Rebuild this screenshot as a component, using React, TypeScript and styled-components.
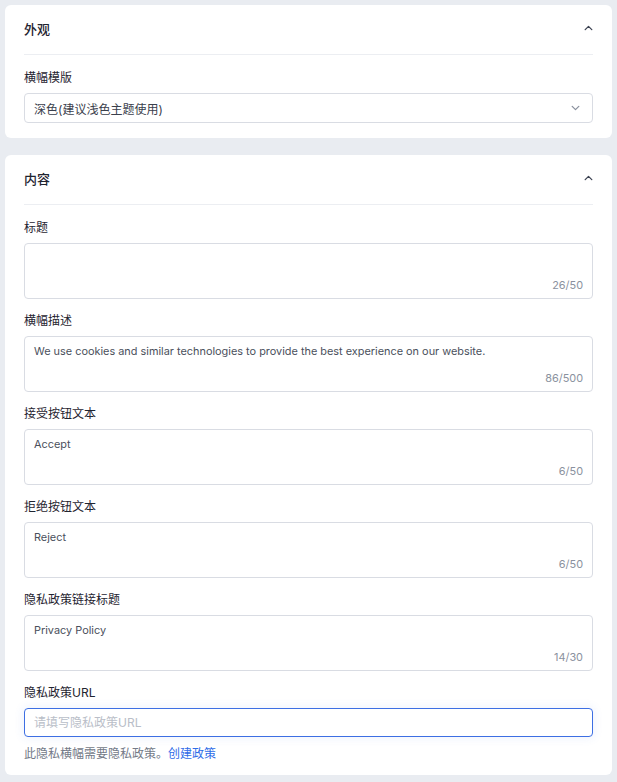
import React from "react";
import styled, { createGlobalStyle } from "styled-components";

const Global = createGlobalStyle`
  html, body { margin: 0; padding: 0; background: #e9ecf1; }
  body { font-family: Inter, "Noto Sans CJK SC", sans-serif; -webkit-font-smoothing: antialiased; }
  * { box-sizing: border-box; }
`;

const Page = styled.div`
  display: flex;
  flex-direction: column;
  gap: 17px;
  padding: 5px 5px 8px 5px;
`;

const Card = styled.section<{ $pb: number }>`
  background: #ffffff;
  border-radius: 6px;
  padding: 0 19px ${(p) => p.$pb}px 19px;
`;

const Header = styled.div`
  height: 50px;
  display: flex;
  align-items: center;
  justify-content: space-between;
  border-bottom: 1px solid #eceef2;
  padding-bottom: 3px;
`;

const Title = styled.h2`
  margin: 0;
  font-size: 13px;
  font-weight: 500;
  color: #1f2430;
`;

const Body = styled.div`
  padding-top: 13px;
  display: flex;
  flex-direction: column;
  gap: 12px;
`;

const Field = styled.div`
  display: flex;
  flex-direction: column;
  gap: 5px;
`;

const Label = styled.label`
  font-size: 12px;
  line-height: 20px;
  font-weight: 400;
  color: #1f2430;
`;

const SelectBox = styled.div`
  height: 30px;
  border: 1px solid #d9dce3;
  border-radius: 4px;
  display: flex;
  align-items: center;
  justify-content: space-between;
  padding: 0 12px 0 9px;
  font-size: 12px;
  color: #3a404c;
`;

const AreaWrap = styled.div`
  position: relative;
  height: 56px;
`;

const Area = styled.textarea`
  width: 100%;
  height: 100%;
  resize: none;
  border: 1px solid #d9dce3;
  border-radius: 4px;
  padding: 6px 9px;
  font-family: Inter, "Noto Sans CJK SC", sans-serif;
  font-size: 10.9px;
  line-height: 16px;
  color: #4a505c;
  outline: none;
  display: block;
`;

const Counter = styled.span`
  position: absolute;
  right: 10px;
  bottom: 6px;
  font-size: 10.9px;
  line-height: 16px;
  color: #8a919e;
`;

const UrlInput = styled.input`
  height: 29px;
  width: 100%;
  border: 1px solid #3d6fe3;
  border-radius: 4px;
  padding: 0 9px;
  font-family: Inter, "Noto Sans CJK SC", sans-serif;
  font-size: 12px;
  color: #3a404c;
  outline: none;
  box-shadow: 0 0 8px 2px rgba(61, 111, 227, 0.08);
  &::placeholder { color: #b9bec8; }
`;

const Help = styled.p`
  margin: 3px 0 0 0;
  font-size: 12px;
  line-height: 18px;
  color: #737a87;
`;

const Link = styled.a`
  color: #2f6ce8;
  text-decoration: none;
`;

const Chevron = ({ dir, color }: { dir: "up" | "down"; color: string }) => (
  <svg width="9" height="6" viewBox="0 0 9 6" fill="none">
    <path
      d={dir === "up" ? "M1.2 4.6 L4.5 1.4 L7.8 4.6" : "M1.2 1.4 L4.5 4.6 L7.8 1.4"}
      stroke={color}
      strokeWidth="1.3"
      strokeLinecap="round"
      strokeLinejoin="round"
    />
  </svg>
);

const fields = [
  { label: "标题", value: "", count: "26/50" },
  {
    label: "横幅描述",
    value: "We use cookies and similar technologies to provide the best experience on our website.",
    count: "86/500",
  },
  { label: "接受按钮文本", value: "Accept", count: "6/50" },
  { label: "拒绝按钮文本", value: "Reject", count: "6/50" },
  { label: "隐私政策链接标题", value: "Privacy Policy", count: "14/30" },
];

export default function App() {
  return (
    <>
      <Global />
      <Page>
        <Card $pb={15}>
          <Header>
            <Title>外观</Title>
            <Chevron dir="up" color="#3a4150" />
          </Header>
          <Body>
            <Field>
              <Label>横幅模版</Label>
              <SelectBox>
                <span>深色(建议浅色主题使用)</span>
                <Chevron dir="down" color="#8a919e" />
              </SelectBox>
            </Field>
          </Body>
        </Card>
        <Card $pb={12}>
          <Header>
            <Title>内容</Title>
            <Chevron dir="up" color="#3a4150" />
          </Header>
          <Body>
            {fields.map((f) => (
              <Field key={f.label}>
                <Label>{f.label}</Label>
                <AreaWrap>
                  <Area readOnly defaultValue={f.value} />
                  <Counter>{f.count}</Counter>
                </AreaWrap>
              </Field>
            ))}
            <Field>
              <Label>隐私政策URL</Label>
              <UrlInput placeholder="请填写隐私政策URL" autoFocus />
              <Help>
                此隐私横幅需要隐私政策。<Link href="#">创建政策</Link>
              </Help>
            </Field>
          </Body>
        </Card>
      </Page>
    </>
  );
}
